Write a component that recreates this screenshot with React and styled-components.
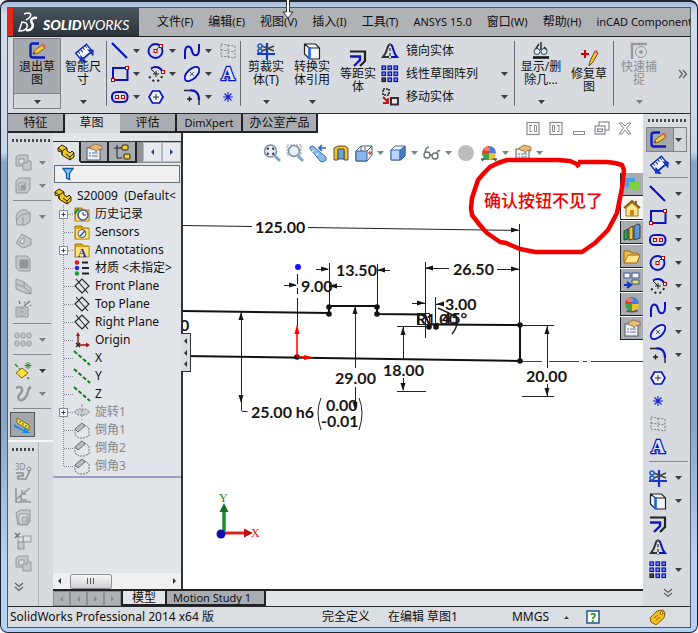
import React from 'react';
import styled, { createGlobalStyle, css } from 'styled-components';

const Global = createGlobalStyle`
  *, *::before, *::after { box-sizing: border-box; }
  body { margin: 0; background: #eef1f5; color: #111; font: 12px/16px "Noto Sans", "Noto Sans CJK SC", sans-serif; }
  button { font: inherit; color: inherit; background: none; border: 0; padding: 0; margin: 0; }
  ul { list-style: none; margin: 0; padding: 0; }
`;

const face = '#d7dade';
const blue = '#0a12b8';

/* ---------- window ---------- */
const Frame = styled.div`
  position: relative;
  display: flex;
  min-height: 100vh;
  padding: 7px 7px 5px;
  border: 1px solid #20242c;
  border-top-width: 2px;
  border-radius: 8px;
  background: linear-gradient(#a9bfdc 0, #cfdcec 12px, #c6d8ec 150px, #86a6c8 160px, #86a6c8 420px, #b4d2f4 560px);
`;
const Shell = styled.div`
  display: flex;
  flex-direction: column;
  flex: 1;
  min-width: 0;
  margin: -1px 0 0;
  background: ${face};
  outline: 1px solid #515964;
`;
const Cursor = styled.svg`
  position: absolute;
  left: 280px;
  top: -2px;
  width: 14px;
  height: 20px;
  z-index: 5;
`;

/* ---------- menu ---------- */
const MenuBar = styled.nav`
  display: flex;
  align-items: stretch;
  height: 29px;
  background: #b0b2b5;
  border-bottom: 1px solid #1b1d20;
  overflow: hidden;
`;
const Brand = styled.div`
  flex: none;
  display: flex;
  align-items: center;
  width: 131px;
  border-left: 5px solid #e2281c;
  background: linear-gradient(#4b555e, #2b333a);
`;
const MenuItems = styled.div`
  display: flex;
  align-items: center;
  gap: 15px;
  padding-left: 18px;
  white-space: nowrap;
`;
const MenuItem = styled.button`
  flex: none;
  font-size: 12px;
`;
const Latin = styled.span`
  font-size: 11px;
`;

/* ---------- ribbon ---------- */
const Ribbon = styled.div`
  display: flex;
  align-items: stretch;
  height: 77px;
  padding: 2px 0 5px 6px;
  border-bottom: 1px solid #26282c;
  background: ${face};
  overflow: hidden;
`;
const BigButton = styled.button`
  flex: none;
  display: flex;
  flex-direction: column;
  align-items: center;
  width: ${p => (p.$wide ? 48 : 46)}px;
  padding-top: ${p => (p.$low ? 10 : 3)}px;
  line-height: 13px;
  color: ${p => (p.$off ? '#8b8e92' : '#111')};
  ${p => p.$on && css`
    background: linear-gradient(#a6a9ad 0 54px, #7e8185 54px 55px, #d3d6da 55px);
    outline: 1px solid #7e8185;
  `}
  > svg:last-child { margin-top: auto; margin-bottom: 4px; }
`;
const BigLabel = styled.span`
  white-space: pre;
  text-align: center;
`;
const Rule = styled.div`
  flex: none;
  width: 1px;
  margin: 2px 2px 2px 0;
  background: #6a6d71;
`;
const ToolGrid = styled.div`
  flex: none;
  display: grid;
  grid-template-columns: repeat(4, 36px);
  grid-auto-rows: 23px;
  width: 131px;
  padding-left: 2px;
  overflow: hidden;
`;
const Tool = styled.button`
  display: flex;
  align-items: center;
  gap: 4px;
`;
const ListTools = styled.div`
  flex: none;
  width: 133px;
  padding-right: 3px;
`;
const ListTool = styled.button`
  display: grid;
  grid-template-columns: 18px 1fr 10px;
  align-items: center;
  gap: 7px;
  width: 100%;
  height: 23px;
  text-align: left;
`;
const More = styled.button`
  margin-left: auto;
  padding-right: 2px;
`;

/* ---------- body ---------- */
const Body = styled.div`
  display: flex;
  flex: 1;
  min-height: 0;
`;
const Main = styled.div`
  position: relative;
  display: flex;
  flex-direction: column;
  flex: 1;
  min-width: 0;
  background: #fff;
`;
const TabRow = styled.div`
  display: flex;
  height: 19px;
`;
const RibbonTab = styled.button`
  flex: none;
  width: ${p => p.$w}px;
  line-height: 16px;
  border: solid #202226;
  border-width: 0 2px 2px 0;
  background: ${p => (p.$on ? face : '#a9acb0')};
  ${p => p.$on && css`border-color: ${face};`}
`;
const Work = styled.div`
  display: flex;
  flex: 1;
`;
const SideBar = styled.div`
  flex: none;
  width: 45px;
  background: ${face};
`;
const SideGroup = styled.div`
  width: ${p => (p.$narrow ? '31px' : '100%')};
  padding: 6px 0 0 3px;
  ${p => p.$narrow ? css`height: 164px; border-right: 1px solid #aeb2b7;` : css`border-bottom: 2px solid #f5f6f8; height: 309px;`}
`;
const Grip = styled.div`
  height: 3px;
  margin: 0 3px ${p => (p.$tight ? 6 : 9)}px 1px;
  background: repeating-linear-gradient(90deg, #44474b 0 2px, transparent 2px 4px);
`;
const SideTool = styled.button`
  display: flex;
  align-items: center;
  gap: 7px;
  height: 23px;
  padding-left: 3px;
  ${p => p.$on && css`width: 23px; padding-left: 2px; background: #a3a6aa; outline: 1px solid #55585c;`}
`;
const SideRule = styled.div`
  height: 1px;
  margin: 3px 2px 4px;
  background: #85888c;
`;

const Center = styled.div`
  display: flex;
  flex-direction: column;
  flex: 1;
  min-width: 0;
`;
const Split = styled.div`
  display: flex;
  flex: 1;
`;
const TreePanel = styled.aside`
  flex: none;
  display: flex;
  flex-direction: column;
  width: 130px;
  padding-top: 8px;
  border-right: 2px solid #303238;
  background: #e1e4e9;
  overflow: hidden;
`;
const PaneTabs = styled.div`
  display: flex;
  height: 22px;
  background: #8e9196;
  border-top: 1px solid #303238;
`;
const PaneTab = styled.button`
  flex: none;
  display: flex;
  align-items: center;
  justify-content: center;
  width: 28px;
  border: solid #202226;
  border-width: 0 2px 2px 0;
  background: ${p => (p.$on ? '#e1e4e9' : '#a9acb0')};
  ${p => p.$on && css`border-bottom-color: #e1e4e9;`}
`;
const PaneScroll = styled.button`
  display: flex;
  align-items: center;
  justify-content: center;
  width: 19px;
  height: 20px;
  background: #e6e9ee;
  border: 1px solid #b4b8be;
`;
const FilterBox = styled.label`
  display: flex;
  align-items: center;
  height: 18px;
  margin: 2px 1px 4px;
  padding-left: 4px;
  background: #f0f0f0;
  border: 1px solid #6a6d72;
  input { flex: 1; min-width: 0; border: 0; background: none; outline: 0; }
`;
const TreeRoot = styled.div`
  display: flex;
  align-items: center;
  gap: 5px;
  height: 18px;
  padding-left: 1px;
  white-space: pre;
`;
const TreeList = styled.ul`
  padding: 0 0 1px 10px;
  border-bottom: 2px solid #9a9fc4;
`;
const TreeItem = styled.li`
  display: flex;
  align-items: center;
  height: 18px;
  white-space: nowrap;
  color: ${p => (p.$off ? '#86898d' : '#111')};
  > svg { margin-right: 4px; }
`;
const BranchBox = styled.span`
  flex: none;
  width: 10px;
`;
const HScroll = styled.div`
  display: flex;
  align-items: center;
  justify-content: space-between;
  height: 16px;
  margin-top: auto;
  padding: 0 4px;
  background: #f0f0f1;
`;
const Thumb = styled.div`
  width: 42px;
  height: 15px;
  margin-right: auto;
  margin-left: 8px;
  border: 1px solid #8d9095;
  border-radius: 2px;
  background: repeating-linear-gradient(90deg, #55585d 0 1px, transparent 1px 3px) no-repeat 16px 3px / 8px 6px, linear-gradient(#f6f6f6, #cfd1d4);
`;
const BottomTabs = styled.div`
  display: flex;
  height: 17px;
  border-top: 2px solid #202226;
  background: #e1e5e9;
`;
const NavButton = styled.button`
  display: flex;
  align-items: center;
  justify-content: center;
  width: 17px;
  background: #aeb1b5;
  border: 1px solid #8b8e92;
`;
const BottomTab = styled.button`
  padding: 0 ${p => (p.$on ? 9 : 13)}px 0 ${p => (p.$on ? 9 : 6)}px;
  font-size: ${p => (p.$on ? 12 : 11)}px;
  line-height: 13px;
  border: solid #202226;
  border-width: 0 2px 2px ${p => (p.$on ? 2 : 0)}px;
  background: ${p => (p.$on ? '#e1e5e9' : '#a9acb0')};
`;

/* ---------- canvas ---------- */
const Canvas = styled.div`
  position: relative;
  flex: 1;
  min-width: 0;
  background: #fff;
`;
const Drawing = styled.svg`
  position: absolute;
  inset: 0;
  width: 100%;
  height: 100%;
  pointer-events: none;
  z-index: 2;
`;
const Dimension = styled.text`
  font: 700 16px Lato, sans-serif;
  fill: #151515;
`;
const Note = styled.text`
  font: 500 17px "Noto Sans CJK SC", sans-serif;
  fill: #f00000;
`;
const AxisName = styled.text`
  font: 12px "Liberation Serif", serif;
  fill: ${p => p.$c};
`;
const SplitHandle = styled.button`
  position: absolute;
  left: -2px;
  top: 200px;
  width: 10px;
  height: 39px;
  display: flex;
  flex-direction: column;
  justify-content: space-evenly;
  align-items: center;
  background: #d9dce1;
  border: 1px solid #303238;
  border-left: 0;
  z-index: 3;
`;
const ViewTools = styled.div`
  position: absolute;
  left: 80px;
  top: 11px;
  display: flex;
  gap: 5px;
`;
const WindowButtons = styled.div`
  position: absolute;
  right: 9px;
  top: 5px;
  display: flex;
  gap: 5px;
`;
const TaskTabs = styled.div`
  position: absolute;
  right: 0;
  top: 59px;
  display: grid;
  gap: 1px;
`;
const TaskTab = styled.button`
  display: flex;
  align-items: center;
  justify-content: center;
  width: 23px;
  height: 23px;
  border: solid #202226;
  border-width: 0 0 1px 1px;
  background: ${p => (p.$on ? '#f4f4f2' : '#a9acb0')};
`;

/* ---------- right toolbar ---------- */
const RightBar = styled.div`
  flex: none;
  width: 47px;
  padding: 5px 0 0 4px;
  background: ${face};
`;
const RightTool = styled.button`
  display: flex;
  align-items: center;
  gap: 8px;
  width: 39px;
  height: 23px;
  padding-left: 2px;
  ${p => p.$on && css`
    background: linear-gradient(90deg, #a6a9ad 0 26px, #7e8185 26px 27px, #d3d6da 27px);
    outline: 1px solid #7e8185;
  `}
`;

/* ---------- status ---------- */
const Status = styled.footer`
  display: flex;
  align-items: center;
  height: 21px;
  padding-left: 2px;
  border-top: 1px solid #26282c;
  background: #dadde1;
  white-space: nowrap;
`;
const StatusText = styled.span`
  margin-left: ${p => p.$gap || 0}px;
`;
const Spring = styled.span`
  flex: ${p => p.$grow};
`;
const StatusMenu = styled.button`
  margin-left: 14px;
`;
const TagButton = styled.button`
  margin: 0 24px 0 46px;
`;

const Svg18 = styled.svg`
  flex: none;
  display: block;
  width: 18px;
  height: 18px;
  overflow: visible;
`;
const TinySvg = styled.svg`
  flex: none;
  display: block;
  width: ${p => p.$w || 7}px;
  height: ${p => p.$h || 4}px;
`;

const Dot = ({ x, y, c = '#c00000' }) => <rect x={x - 1.5} y={y - 1.5} width="3" height="3" fill="#fff" stroke={c} />;
const Folder = () => (
  <g>
    <path d="M2 3h7l1 2h6v11H2z" fill="#e0a818" stroke="#a87808" />
    <path d="M3 6h12.500v9.500H3z" fill="#ffe27a" />
  </g>
);
const Pencil = () => (
  <g>
    <path d="M5 12l2-4 7-5 3 3-7 5z" fill="#f6c83c" stroke="#6b4a10" strokeWidth=".8" />
    <path d="M13 3l2-1.500 3 2.500-2 2z" fill="#e0604c" />
    <path d="M5 12l1-2 1 1z" fill="#222" />
  </g>
);
const Ball = () => (
  <g>
    <path d="M9 9V2A7 7 0 0 1 16 9z" fill="#4a78e0" />
    <path d="M9 9V2A7 7 0 0 0 2 9z" fill="#e03a2a" />
    <path d="M9 9H2A7 7 0 0 0 9 16z" fill="#3aa648" />
    <path d="M9 9H16A7 7 0 0 1 9 16z" fill="#f0c030" />
    <ellipse cx="7" cy="5" rx="3" ry="2" fill="#fff" opacity=".35" />
  </g>
);
const Card = () => (
  <g>
    <rect x="2" y="5" width="13" height="12" fill="#f2f3f5" stroke="#55585c" />
    <path d="M4 10h2M4 13h2M7 10h6M7 13h6" stroke="#5a78b8" />
    <path d="M5 4l5-3 7 2v4l-3-1-3 3-1-2-4-1z" fill="#eab87a" stroke="#8a5a28" strokeWidth=".7" />
  </g>
);
const greyBox = { fill: '#c3c6ca', stroke: '#94979b' };

const art = {
  exit: <><path d="M11 1.500H5Q2.500 1.500 2.500 4V13Q2.500 15.500 5 15.500H17" fill="none" stroke="#1018c0" strokeWidth="2.400" /><Pencil /></>,
  dim: <g transform="rotate(-40 9 9)" stroke="#1430b8" fill="#f4f8ff" strokeWidth="1.500"><path d="M2 6h14v9H2z" /><path d="M5 6v3M8 6v4M11 6v3M14 6v3" strokeWidth="1" /><path d="M1 15l3-3v6zM17 15l-3-3v6zM4 15h10" fill="#2a5ad0" /></g>,
  line: <path d="M1 1l15 15" stroke={blue} strokeWidth="2.200" />,
  rect: <><rect x="2" y="3" width="14.500" height="12" fill="none" stroke={blue} strokeWidth="2" /><Dot x={2} y={15} /><Dot x={16} y={3} /></>,
  slot: <><rect x="1" y="4" width="15.500" height="10" rx="4.500" fill="none" stroke={blue} strokeWidth="2" /><Dot x={6} y={9} /><Dot x={12} y={9} /></>,
  circle: <><circle cx="8.500" cy="9" r="7" fill="none" stroke={blue} strokeWidth="1.900" /><path d="M8 9l6-6" stroke="#c00000" /><Dot x={8.5} y={9} /><Dot x={14} y={4} /></>,
  arc: <><path d="M4 3.500C8 .5 14 2 15.500 7" fill="none" stroke={blue} strokeWidth="2" /><path d="M4 4l5 5M9 6v6M6 9h6" stroke="#222" fill="none" /><path d="M15 11C13 18 4 18 2 10" fill="none" stroke="#222" strokeWidth="2" strokeDasharray="2 3" /><Dot x={16} y={7} /></>,
  spline: <path d="M2 17V9C3 2 8 4 9 9S16 16 16 7V2" fill="none" stroke={blue} strokeWidth="2" />,
  ellipse: <><ellipse cx="9" cy="9" rx="9" ry="4.800" transform="rotate(-43 9 9)" fill="#e4e9f6" stroke={blue} strokeWidth="1.800" /><path d="M7 7l4 4M11 7l-4 4" stroke="#333" strokeWidth=".8" /></>,
  fillet: <><path d="M7 2.500C13 2 16 5 16 12" fill="none" stroke={blue} strokeWidth="2.200" /><path d="M1 2.500h6M16 12v5M4 11h5M6.500 8.500v5" stroke="#222" strokeWidth="1.400" /></>,
  hex: <><path d="M5.500 3h7l3.500 6-3.500 6h-7L2 9z" fill="#eef1fa" stroke={blue} strokeWidth="1.700" /><path d="M6 9h6M9 6v6" stroke="#333" /></>,
  star: <path d="M9 4v10M4 9h10M5.500 5.500l7 7M12.500 5.500l-7 7" stroke="#1420d8" strokeWidth="1.100" />,
  plane: <path d="M2 2l14 2v12L2 14zM2 8l14 2M9 3v12" fill="none" stroke="#777a7e" strokeDasharray="2 1.500" />,
  text: <text x="9" y="15" textAnchor="middle" fontFamily="Liberation Serif, serif" fontWeight="700" fontSize="19" fill="#dfe6fa" stroke={blue} strokeWidth="2.600" paintOrder="stroke">A</text>,
  trim: <><path d="M0 12h18M10 1v17" stroke="#1638c8" strokeWidth="2.200" /><path d="M5 4l12 5M5 9l12-5" stroke="#444" strokeWidth="1.600" /><circle cx="3" cy="4" r="2" fill="none" stroke="#1c60d0" strokeWidth="1.600" /><circle cx="3" cy="9" r="2" fill="none" stroke="#1c60d0" strokeWidth="1.600" /></>,
  convert: <><path d="M1.500 2h11l4 4v11h-10l-5-5zM1.500 2l5 4v11M6.500 6h10" fill="#f3f5f8" stroke="#222" strokeWidth="1.200" /><path d="M6.500 5v12" stroke="#1464e8" strokeWidth="2.500" /></>,
  offset: <g fill="none"><path d="M1 2.500h15V12l-5 5" stroke="#222" strokeWidth="2.200" /><path d="M1 7.500h10V11l-6 6" stroke="#1018b8" strokeWidth="2.400" /></g>,
  mirror: <g fill="none" strokeWidth="2"><path d="M8 2.500C6 4 7 9 2 15h6" stroke="#333" /><path d="M10 2.500c3 2 1 7 6 12.500h-6" stroke={blue} /><path d="M9 1v16" stroke="#333" strokeWidth="1.200" strokeDasharray="3 2" /></g>,
  pattern: <g stroke={blue} fill="#7f90e8" strokeWidth="1.200">{[2, 8, 14].map(y => [2, 8, 14].map(x => <rect key={x + '-' + y} x={x - 1} y={y - 1} width="3.500" height="3.500" {...(x === 2 && y === 14 ? { fill: '#444', stroke: '#222' } : {})} />))}</g>,
  move: <><rect x="2" y="1" width="6" height="6" fill="none" stroke="#222" strokeWidth="1.600" strokeDasharray="2 1" /><path d="M2 9l5 5m0-4v5h-5" stroke="#c01010" strokeWidth="1.800" fill="none" /><rect x="10" y="10" width="7" height="6.500" fill="#e8eaee" stroke="#333" strokeWidth="2" /></>,
  show: <><path d="M1 15.500h16" stroke="#111" strokeWidth="2.500" /><path d="M9 0v8M3 8l4-6M15 8l-3-3" stroke="#222" strokeWidth="1.400" fill="none" /><circle cx="5" cy="9.500" r="3" fill="#d8eaf4" stroke="#33424c" /><circle cx="12" cy="9.500" r="3" fill="#d8eaf4" stroke="#33424c" /></>,
  repair: <><path d="M1 5h8M5 1v8" stroke="#d00000" strokeWidth="2" /><path d="M9 17l1-5 5-10 3 2-5 9z" fill="#f6c83c" stroke="#6b4a10" /><path d="M14 3l1-2 3 1-1 3z" fill="#e0604c" /></>,
  snap: <g fill="none" stroke="#96999d"><path d="M2 17V2h15" strokeWidth="2.500" /><circle cx="11" cy="10" r="5.500" /><circle cx="11" cy="10" r="1.500" fill="#96999d" /></g>,
  boss: <g {...greyBox}><path d="M2 3l3-2h9v9l-2 2H2z" /><path d="M5 5h5v5H5z" fill="#e0e2e5" /><path d="M9 9h4v-2h4v9H9z" /></g>,
  cut: <g {...greyBox}><path d="M2 4l3-3h11v11l-3 4H2z" /><path d="M5 6h6v7H5z" fill="#e0e2e5" /><path d="M7 8h4v4H7z" fill="#9a9da1" /></g>,
  round: <g {...greyBox}><path d="M2 9C3 3 8 1 12 2l4 3v9l-5 3H3z" /><path d="M3 12C5 8 8 6 16 5M9 17V9" fill="none" /></g>,
  rib: <g {...greyBox}><path d="M2 12l6-9 9 5v6l-8 3z" /><path d="M5 12l5-6v6z" fill="#eceef0" /></g>,
  shell: <g {...greyBox}><path d="M2 2h11l3 3v12H5l-3-3z" /><path d="M6 6h8v8H6z" fill="#909397" /></g>,
  draft: <g {...greyBox}><path d="M2 2l8 3 7 6v6l-6-1-9-4z" /><path d="M10 5v5l7 7M2 7l8 3" fill="none" /></g>,
  wizard: <g {...greyBox}><path d="M2 7h12v10H2z" /><circle cx="8" cy="12" r="3.500" fill="#e0e2e5" /><circle cx="8" cy="12" r="1.500" /><path d="M10 6l6-5M10 2l1 1M16 5l1 1M5 1l1 3" stroke="#77797d" strokeWidth="1.400" /></g>,
  linear: <g {...greyBox}>{[2, 8, 14].map(x => <g key={x}><rect x={x - 1} y="2" width="4" height="5" rx="1.500" /><rect x={x - 1} y="10" width="4" height="5" rx="1.500" /></g>)}</g>,
  refgeo: <><path d="M1 2l14 15" stroke="#2a8a2a" strokeWidth="1.500" strokeDasharray="4 2" /><path d="M2 11l6-5 6 5-6 5z" fill="#ffe040" stroke="#8a6a00" /><path d="M14 0v7M10.500 3.500h7M11.500 1l5 5M16.500 1l-5 5" stroke="#2a8a2a" /></>,
  curve: <path d="M2 3C8 0 10 5 6 9S6 18 11 13 12 4 17 2" fill="none" stroke="#95989c" strokeWidth="2.500" />,
  instant: <><path d="M4 2l12 7v5L4 7z" fill="#f2e25c" stroke="#7a6c10" /><path d="M7 5v2M10 7v2M13 9v2" stroke="#443c00" /><path d="M1 8l10 6v-3l6 6H9l1-2-9-4z" fill="#1e88e8" /></>,
  three: <g stroke="#888b8f" fill="none"><text x="1" y="7" fontSize="8" fill="#888b8f" stroke="none">3D</text><path d="M2 10h7v3H4v3h8l4-9" strokeWidth="1.500" /><circle cx="15" cy="6" r="2" /></g>,
  sk3: <g stroke="#94979b" fill="none" strokeWidth="1.500"><path d="M2 2v14h15M2 14l5-5v5h6M7 9l9-7M12 8h-4V4" /></g>,
  box: <g {...greyBox}><path d="M2 4l4-3h10v12l-3 3H4z" /><rect x="5" y="5" width="9" height="10" rx="2" fill="#dddfe2" /><rect x="8" y="8" width="5" height="5" rx="1" /></g>,
  del: <g {...greyBox}><path d="M1 1l5 5M6 1L1 6" stroke="#707377" strokeWidth="1.500" /><rect x="9" y="4" width="8" height="6" fill="#dddfe2" /><rect x="4" y="10" width="6" height="7" /><rect x="4" y="5" width="5" height="5" fill="#dddfe2" /></g>,
  part: <g stroke="#2c2400" strokeWidth="1"><path d="M1 5l4-3 5 3v3l3 2 2-2 2 2v4l-4 3-8-5V9L1 8z" fill="#f2c81e" /><path d="M1 5l4 3 5-3M5 8v4M9 11l4 3 4-4M13 14v3" fill="none" /></g>,
  props: <Card />,
  config: <g stroke="#222"><path d="M4 2v13h5M4 5h5M4 5H1" fill="none" /><rect x="9" y="2" width="6" height="5" rx="1" fill="#f2d020" /><rect x="11" y="11" width="6" height="5" rx="1" fill="#f2d020" /></g>,
  funnel: <path d="M4 3.500h10l-3.500 5v6l-3-1.500V8.500z" fill="#7cc4f4" stroke="#1258a8" strokeWidth="1.300" />,
  history: <><Folder /><circle cx="10" cy="10" r="5" fill="#fff" stroke="#3a58c8" strokeWidth="1.600" /><path d="M10 7v3h3" stroke="#333" fill="none" /><path d="M6 4a7 7 0 0 0-4 5" stroke="#18982c" strokeWidth="2" fill="none" /></>,
  sensors: <><Folder /><circle cx="9" cy="10.500" r="4" fill="#eaf2fc" stroke="#555" /><path d="M7 13l5-5" stroke="#2a58a8" strokeWidth="1.400" /></>,
  notes: <><Folder /><text x="9" y="15.500" textAnchor="middle" fontFamily="Liberation Serif, serif" fontWeight="700" fontSize="12" fill="#1530b8">A</text></>,
  material: <><circle cx="4" cy="3.500" r="2.300" fill="#d82020" /><circle cx="4" cy="9" r="2.300" fill="#2030d8" /><circle cx="4" cy="14.500" r="2.300" fill="#20a030" /><path d="M9 3.500h6M9 9h7M9 14.500h7" stroke="#222" strokeWidth="1.800" /></>,
  refplane: <path d="M2 9l7-7 7 7-7 7zM3 2l12 14" fill="none" stroke="#222" strokeWidth="1.100" />,
  origin: <><path d="M5 14V3m0 11h9" stroke="#a01010" strokeWidth="1.400" /><path d="M3 5l2-4 2 4zM13 11.500l4 2.500-4 2.500z" fill="#b01010" /><path d="M3 12l4 4M7 12l-4 4" stroke="#222" strokeWidth="1.300" /></>,
  axis: <path d="M1 2l16 14" stroke="#148020" strokeWidth="2" strokeDasharray="4 2" />,
  revolve: <g fill="#c9ccd0" stroke="#85888c"><path d="M1 9l4-3h8l4 3-4 3H5z" strokeDasharray="2 1" /><path d="M9 1v16" strokeDasharray="3 2" /></g>,
  chamfer: <g stroke="#707377"><path d="M2 8l7-6 7 5v8l-5 2H6l-4-3z" fill="#e3e5e8" strokeDasharray="2 1" /><path d="M2 8l7-6 3 3-7 6z" fill="#b9bcc0" /></g>,
  zoomfit: <><circle cx="7.500" cy="7" r="6" fill="#e6eef8" stroke="#7e8ca0" strokeWidth="1.500" /><path d="M4.500 6V4.500H6M9 4.500h1.500V6M10.500 8.500V10H9M6 10H4.500V8.500" fill="none" stroke="#333" strokeWidth="1.300" /><path d="M12 12l5 5" stroke="#7a9fd0" strokeWidth="2.800" /></>,
  zoomarea: <><path d="M1 1h14v10H1z" fill="none" stroke="#999" strokeDasharray="2 1" /><circle cx="8" cy="7" r="5.500" fill="#e6eef8" stroke="#7e8ca0" strokeWidth="1.500" /><path d="M12 12l5 5" stroke="#7a9fd0" strokeWidth="2.800" /></>,
  prev: <><path d="M1 3l3-1 8 7 5 4 0 3-3 2-3-1-3-4-7-8z" fill="#8bbbe6" stroke="#2f6fb5" /><path d="M5 6l-2 2M9 9l-2 3" stroke="#fff" /><path d="M17 4h-6m2-3l-3 3 3 3" stroke="#2a62b8" fill="none" strokeWidth="1.600" /></>,
  section: <g stroke="#444" strokeWidth=".9"><path d="M2 4l4-2h7l3 2v12h-4V7H6v9H2z" fill="#f0c22c" /><path d="M6 5h6v10H6z" fill="#5fa4e0" /></g>,
  orient: <g stroke="#3a5a88"><path d="M1 7l5-5h11v9l-5 6H1z" fill="#fff" /><path d="M1 7h11v10H1z" fill="#86b6ec" /><path d="M12 7l5-5M6 2v5" fill="none" /><path d="M10 3v3M15 7v4M13 9h4" stroke="#d02020" /></g>,
  style: <g stroke="#3f68a8"><path d="M2 6l4-4h10v10l-4 4H2z" fill="#eef6ff" /><path d="M2 6h9v10H2z" fill="#b7d6f6" /><path d="M11 6l5-4v10l-5 4z" fill="#4a7cc0" /></g>,
  glasses: <g fill="none" stroke="#6b7278" strokeWidth="1.400"><circle cx="4" cy="11" r="3" /><circle cx="12" cy="12" r="3" /><path d="M2 8c1-4 2-5 4-5M14 9c1-3 2-3 3-2M7 11h2" /></g>,
  sphere: <circle cx="9" cy="9" r="8" fill="#bcbcbc" />,
  scene: <><path d="M2 17l4-5m10 5l-4-5M1 15h16" stroke="#555" strokeWidth="1.400" /><Ball /></>,
  settings: <Card />,
  prevwin: <g fill="none" stroke="#888b90"><rect x="3" y="3.500" width="12" height="12" strokeWidth="1.200" /><path d="M6 6.500h2M6 6v6.500h2M12.500 6.500h-2v6h2v-6" /></g>,
  nextwin: <g fill="none" stroke="#888b90"><rect x="3" y="3.500" width="12" height="12" strokeWidth="1.200" /><path d="M5.500 6.500h2v6h-2v-6M10 6.500h2M12 6v6.500h-2" /></g>,
  minim: <rect x="3.500" y="12.500" width="11" height="3" fill="#fff" stroke="#888b90" />,
  restore: <g fill="#fff" stroke="#888b90" strokeWidth="1.200"><rect x="6" y="3" width="10" height="8" /><rect x="2" y="7" width="10" height="8" /><rect x="4.500" y="10" width="5" height="2.500" /></g>,
  close: <path d="M3 4h3l3 3 3-3h3l-4.500 5L15 15h-3l-3-4-3 4H3l4.500-6z" fill="#fff" stroke="#888b90" />,
  forum: <><path d="M1 3h11v8H6l-3 3v-3H1z" fill="#4aa0e8" /><path d="M6 7h11v7h-2v3l-3-3H6z" fill="#7ed13c" /></>,
  home: <><path d="M3 9v8h12V9L9 4z" fill="#ffe88a" stroke="#a06c10" /><path d="M1 9l8-7 8 7M13 2v3" fill="none" stroke="#8a5a10" strokeWidth="1.800" /><rect x="7" y="11" width="4" height="6" fill="#c88a20" /></>,
  library: <g stroke="#333" strokeWidth=".9"><path d="M1 8l4-2v10l-4 1z" fill="#28a050" /><path d="M6 5l4-2v13l-4 1z" fill="#f0c428" /><path d="M11 3l4-2 2 1v13l-6 2z" fill="#5a96d8" /></g>,
  explorer: <><path d="M1 4h6l1 2h7v9H1z" fill="#f2c24a" stroke="#9a6a10" /><path d="M5 8h12l-3 8H1z" fill="#ffe28c" stroke="#9a6a10" /></>,
  palette: <><g fill="#f4f6fa" stroke="#3a5a90"><rect x="1" y="2" width="6" height="5" /><rect x="9" y="2" width="7" height="5" /><rect x="9" y="9" width="7" height="4" fill="#f0e060" /></g><path d="M1 14h6m-3-3l4 3-4 3" stroke="#1030c8" fill="none" strokeWidth="2" /></>,
  ball: <><ellipse cx="9" cy="16" rx="6" ry="1.500" fill="#55585c" /><Ball /></>,
  help: <><rect x="3" y="3" width="12" height="12" fill="#fff" stroke="#1c5a8a" strokeWidth="1.500" /><text x="9" y="14" textAnchor="middle" fontSize="12" fontWeight="700" fill="#109828">?</text></>,
  tag: <><path d="M2 10l7-7 6-1 2 3-1 5-8 7-5-3z" fill="#f4c020" stroke="#8a5c00" /><circle cx="13.500" cy="5" r="1.400" fill="#fff" stroke="#8a5c00" /><path d="M6 10l4-3M8 12l4-3" stroke="#9a6a00" /></>,
};

const Icon = ({ name }) => <Svg18 viewBox="0 0 18 18" aria-hidden="true">{art[name]}</Svg18>;
const Caret = ({ up, off }) => (
  <TinySvg viewBox="0 0 7 4" aria-hidden="true"><path d={up ? 'M1 4l2.500-3L6 4z' : 'M0 0h7L3.500 4z'} fill={off ? '#7d8084' : '#3a3d42'} /></TinySvg>
);
const Arrow = ({ right, color = '#333' }) => (
  <TinySvg $w={5} $h={8} viewBox="0 0 5 8" aria-hidden="true"><path d={right ? 'M1 1l3 3-3 3z' : 'M4 1L1 4l3 3z'} fill={color} /></TinySvg>
);
const Chevrons = ({ down }) => (
  <TinySvg $w={10} $h={10} viewBox="0 0 10 10" aria-hidden="true">
    <path d={down ? 'M1 1l4 3.500L9 1M1 5l4 3.500L9 5' : 'M1 1l3.500 4L1 9M5 1l3.500 4L5 9'} fill="none" stroke="#5c6064" strokeWidth="1.300" />
  </TinySvg>
);

const menus = [['文件', '(F)'], ['编辑', '(E)'], ['视图', '(V)'], ['插入', '(I)'], ['工具', '(T)'], ['', 'ANSYS 15.0'], ['窗口', '(W)'], ['帮助', '(H)'], ['', 'inCAD Component']];
const sketchTools = [
  ['line', '直线', 1], ['circle', '圆', 1], ['spline', '样条曲线', 1], ['plane', '基准面'],
  ['rect', '矩形', 1], ['arc', '圆弧', 1], ['ellipse', '椭圆', 1], ['text', '文字'],
  ['slot', '槽口', 1], ['hex', '多边形'], ['fillet', '圆角', 1], ['star', '点'],
];
const ribbonTabs = [['特征', 57], ['草图', 55, 1], ['评估', 57], ['DimXpert', 66], ['办公室产品', 75]];
const leftTools = [
  ['boss', 1], ['cut', 1], null, ['round', 1], ['rib'], ['shell'], ['draft'], ['wizard'], null, ['linear', 1], null, ['refgeo', 1], ['curve', 1], null,
];
const tree = [
  ['history', '历史记录', 1], ['sensors', 'Sensors'], ['notes', 'Annotations', 1], ['material', '材质 <未指定>'],
  ['refplane', 'Front Plane'], ['refplane', 'Top Plane'], ['refplane', 'Right Plane'], ['origin', 'Origin'],
  ['axis', 'X'], ['axis', 'Y'], ['axis', 'Z'], ['revolve', '旋转1', 1, 1], ['chamfer', '倒角1', 0, 1], ['chamfer', '倒角2', 0, 1], ['chamfer', '倒角3', 0, 1],
];
const rightTools = [
  ['exit', 1, 1], ['dim', 1], null, ['line', 1], ['rect', 1], ['slot', 1], ['circle', 1], ['arc', 1], ['spline', 1], ['ellipse', 1], ['fillet', 1],
  ['hex'], ['star'], ['plane'], ['text'], null, ['trim', 1], ['convert', 1], ['offset'], ['mirror'], ['pattern', 1],
];
const viewTools = [['zoomfit'], ['zoomarea'], ['prev'], ['section'], ['orient', 1], ['style', 1], ['glasses', 1], ['sphere'], ['scene', 1], ['settings', 1]];

const Big = ({ icon, label, caret, ...rest }) => (
  <BigButton {...rest}>
    <Icon name={icon} />
    <BigLabel>{label}</BigLabel>
    {caret && <Caret off={rest.$off} />}
  </BigButton>
);

const Branch = ({ open, last }) => (
  <BranchBox>
    <Svg18 viewBox="0 0 18 18" aria-hidden="true">
      <path d={last ? 'M.5 0v9' : 'M.5 0v18'} stroke="#8a8d92" strokeDasharray="1 1" />
      <path d="M1 9.500h10" stroke="#8a8d92" strokeDasharray="1 1" />
      {open ? <><rect x="-3.500" y="5.500" width="8" height="8" fill="#fff" stroke="#8a8d92" /><path d="M-1.500 9.500h4M.5 7.500v4" stroke="#2a3a88" /></> : null}
    </Svg18>
  </BranchBox>
);

const Logo = () => (
  <svg width="126" height="28" viewBox="0 0 126 28" role="img" aria-label="SolidWorks">
    <g fill="none" stroke="#fff" strokeWidth="1.500">
      <path d="M11 6c8-3 9 2 2 6" />
      <path d="M6 23l3-9c8 0 7 9-3 9z" />
      <path d="M24 10c-5-1-7 2-5 5s0 8-6 7" strokeWidth="2.500" />
    </g>
    <text x="30" y="22" fill="#fff" fontFamily="Lato, sans-serif" fontStyle="italic" fontSize="14" fontWeight="900">SOLID<tspan fontWeight="400">WORKS</tspan></text>
  </svg>
);

/* Arrowhead with its tip at x,y; d gives the direction it points in. */
const Head = ({ x, y, d, c = '#151515', s = 8 }) => (
  <path d={`M0 0l${-s} -2.500v5z`} transform={`translate(${x} ${y}) rotate(${{ r: 0, d: 90, l: 180, u: 270 }[d]})`} fill={c} />
);

const heads = [
  [519, 230, 'r'], [329, 269, 'r'], [377, 270, 'l'], [297, 285, 'r'], [329, 286, 'l'], [241, 312, 'u'], [241, 403, 'd'], [355, 306, 'u'], [355, 410, 'd'],
  [425, 268, 'l'], [519, 269, 'r'], [425, 303, 'r'], [436, 304, 'l'], [403, 327, 'u'], [403, 391, 'd'], [547, 326, 'u'], [547, 396, 'd'],
];
const points = [[329, 307], [329, 314], [377, 307], [377, 314], [429, 327], [436, 327], [520, 325], [520, 361], [297, 357]];
const dimensions = [
  [255, 233, '125.00'], [336, 276, '13.50'], [301, 292, '9.00'], [453, 275, '26.50'], [445, 310, '3.00'], [416, 325, 'R1.00'], [442, 324, '45°'],
  [335, 384, '29.00'], [383, 376, '18.00'], [526, 382, '20.00'], [251, 418, '25.00 h6'], [326, 411, '0.00'], [321, 427, '-0.01'], [180, 331, '0'],
];

const Model = () => (
  <Drawing role="img" aria-label="草图1">
    <g transform="translate(-183 -133)">
      <g stroke="#222" fill="none" strokeWidth="1">
        <path d="M183 225.500l69 1M308 227.500l211 3M519.500 224v100" />
        <path d="M297.500 274v10M297.500 288v6M297.500 298v28M329.500 263v44M377.500 264v42" />
        <path d="M316 269.500h12M378 270.500h12M284 285.500h12M330 286.500h12" />
        <path d="M241.500 312v98l1 1.500h5M355.500 306v62M355.500 387v20" />
        <path d="M425.500 262v76M435.500 297v28M426 268.500h23M497 269.500h22M412 303.500h13M436 304.500h8" />
        <path d="M397 326.500h30M403.500 327v31M403.500 378v12M397 391.500h29" />
        <path d="M520 325.500h34M547.500 326v42M547.500 384v13M522 396.500h32" />
        <path d="M522 361.500h20M549 361.500h30M583 361.500h4M591 361.500h52" stroke="#444" />
        <path d="M457 322q0 6-5 12M438 308l15 7" strokeWidth="1.500" />
        <path d="M321 398q-6 14 0 32M359 398q6 14 0 32" />
      </g>
      <g stroke="#111" fill="none" strokeWidth="2">
        <path d="M183 311l146 2v-7h48v8l48 .500 4 10h6l85 .500v36" />
        <path d="M183 356l337 5" />
      </g>
      {points.map(([x, y]) => <circle key={x + '.' + y} cx={x} cy={y} r="2.800" fill="#111" />)}
      {heads.map(([x, y, d]) => <Head key={x + d + y} x={x} y={y} d={d} />)}
      <circle cx="298" cy="267" r="3" fill="#1010ff" />
      <path d="M297 357v-24M297 357h8" stroke="#f00" strokeWidth="1.500" />
      <Head x={297} y={324} d="u" c="#f00" s={10} />
      <Head x={314} y={357.5} d="r" c="#f00" s={10} />

      {dimensions.map(([x, y, t]) => <Dimension key={x + t} x={x} y={y}>{t}</Dimension>)}
      <rect x="417.500" y="313.500" width="12" height="11" fill="none" stroke="#222" />

      <path d="M224 531v-20" stroke="#208a38" strokeWidth="3.500" />
      <path d="M219.500 512l4.500-9 4.500 9z" fill="#12702a" />
      <path d="M224 533h22" stroke="#e02020" strokeWidth="3" />
      <path d="M244 528.500l9 4.500-9 4.500z" fill="#b81414" />
      <circle cx="221" cy="534" r="4.500" fill="#1010b0" />
      <AxisName x="219" y="502" $c="#109010">Y</AxisName>
      <AxisName x="251" y="537" $c="#f01010">X</AxisName>

      <path d="M579 167L577 164 570 161 558 160H507L498 163 490 167 484 173 478 180 472 198 471 208 472 215 479 224 487 233 500 242 506 243 520 249 535 252H582L595 243 608 230 617 213 622 188 624 170 622 165 615 163 607 162H578" fill="none" stroke="#f00000" strokeWidth="4.500" strokeLinejoin="round" />
      <Note x="484" y="207">确认按钮不见了</Note>
    </g>
  </Drawing>
);

export default function App() {
  return (
    <Frame>
      <Global />
      <Cursor viewBox="0 0 14 20" aria-hidden="true"><path d="M5.500 0v12H2l5 6 5-6H8.500V0" fill="#fff" stroke="#333" /></Cursor>
      <Shell>
        <MenuBar>
          <Brand><Logo /></Brand>
          <MenuItems>
            {menus.map(([zh, en]) => <MenuItem key={zh + en}>{zh}<Latin>{en}</Latin></MenuItem>)}
          </MenuItems>
        </MenuBar>

        <Ribbon>
          <Big icon="exit" label={'退出草\n图'} caret $on />
          <Big icon="dim" label={'智能尺\n寸'} caret />
          <Rule />
          <ToolGrid>
            {sketchTools.map(([icon, label, caret]) => (
              <Tool key={icon} aria-label={label}><Icon name={icon} />{caret && <Caret />}</Tool>
            ))}
          </ToolGrid>
          <Rule />
          <Big icon="trim" label={'剪裁实\n体(T)'} caret />
          <Big icon="convert" label={'转换实\n体引用'} caret />
          <Big icon="offset" label={'等距实\n体'} $low />
          <ListTools>
            <ListTool><Icon name="mirror" />镜向实体</ListTool>
            <ListTool><Icon name="pattern" />线性草图阵列<Caret /></ListTool>
            <ListTool><Icon name="move" />移动实体<Caret /></ListTool>
          </ListTools>
          <Rule />
          <Big icon="show" label={'显示/删\n除几...'} caret $wide />
          <Big icon="repair" label={'修复草\n图'} $low $wide />
          <Rule />
          <Big icon="snap" label={'快速捕\n捉'} caret $off />
          <More aria-label="更多"><Chevrons /></More>
        </Ribbon>

        <Body>
          <Main>
            <TabRow>
              {ribbonTabs.map(([t, w, on]) => <RibbonTab key={t} $w={w} $on={on}>{t === 'DimXpert' ? <Latin>{t}</Latin> : t}</RibbonTab>)}
            </TabRow>
            <Work>
              <SideBar>
                <SideGroup>
                  <Grip />
                  {leftTools.map((t, i) => t
                    ? <SideTool key={t[0]} aria-label={t[0]}><Icon name={t[0]} />{t[1] && <Caret off={t[0] !== 'refgeo'} />}</SideTool>
                    : <SideRule key={i} />)}
                  <SideTool $on aria-label="Instant3D"><Icon name="instant" /></SideTool>
                </SideGroup>
                <SideGroup $narrow>
                  <Grip />
                  {['three', 'sk3', 'box', 'del', 'boss'].map(n => <SideTool key={n} aria-label={n}><Icon name={n} /></SideTool>)}
                  <SideTool aria-label="更多"><Chevrons down /></SideTool>
                </SideGroup>
              </SideBar>
              <Center>
                <Split>
                  <TreePanel>
                    <PaneTabs>
                      <PaneTab $on aria-label="特征树"><Icon name="part" /></PaneTab>
                      <PaneTab aria-label="属性"><Icon name="props" /></PaneTab>
                      <PaneTab aria-label="配置"><Icon name="config" /></PaneTab>
                      <Spring $grow={1} />
                      <PaneScroll aria-label="向左"><Arrow color="#2a3f9a" /></PaneScroll>
                      <PaneScroll aria-label="向右"><Arrow right color="#2a3f9a" /></PaneScroll>
                    </PaneTabs>
                    <FilterBox><Icon name="funnel" /><input aria-label="过滤" /></FilterBox>
                    <TreeRoot><Icon name="part" />S20009  (Default&lt;</TreeRoot>
                    <TreeList>
                      {tree.map(([icon, label, open, off], i) => (
                        <TreeItem key={label} $off={off}><Branch open={open} last={i === tree.length - 1} /><Icon name={icon} />{label}</TreeItem>
                      ))}
                    </TreeList>
                    <HScroll><Arrow /><Thumb /><Arrow right /></HScroll>
                  </TreePanel>
                  <Canvas>
                    <ViewTools>
                      {viewTools.map(([n, caret]) => <Tool key={n} aria-label={n}><Icon name={n} />{caret && <Caret off />}</Tool>)}
                    </ViewTools>
                    <SplitHandle aria-label="折叠面板"><Arrow /><Arrow /><Arrow /></SplitHandle>
                    <Model />
                  </Canvas>
                </Split>
                <BottomTabs>
                  {['first', 'prev', 'next', 'last'].map((n, i) => <NavButton key={n} aria-label={n}><Arrow right={i > 1} color="#85888c" /></NavButton>)}
                  <BottomTab $on>模型</BottomTab>
                  <BottomTab>Motion Study 1</BottomTab>
                </BottomTabs>
              </Center>
            </Work>
            <WindowButtons>
              {['prevwin', 'nextwin', 'minim', 'restore', 'close'].map(n => <Tool key={n} aria-label={n}><Icon name={n} /></Tool>)}
            </WindowButtons>
            <TaskTabs>
              {['forum', 'home', 'library', 'explorer', 'palette', 'ball', 'props'].map(n => <TaskTab key={n} $on={n === 'home'} aria-label={n}><Icon name={n} /></TaskTab>)}
            </TaskTabs>
          </Main>
          <RightBar>
            <Grip $tight />
            {rightTools.map((t, i) => t
              ? <RightTool key={t[0]} $on={t[2]} aria-label={t[0]}><Icon name={t[0]} />{t[1] && <Caret />}</RightTool>
              : <SideRule key={i} />)}
            <RightTool aria-label="更多"><Spring $grow={1} /><Chevrons down /><Spring $grow={1} /></RightTool>
          </RightBar>
        </Body>

        <Status>
          <StatusText>SolidWorks Professional 2014 x64 版</StatusText>
          <Spring $grow={2} />
          <StatusText>完全定义</StatusText>
          <StatusText $gap={18}>在编辑 草图1</StatusText>
          <Spring $grow={1} />
          <StatusText>MMGS</StatusText>
          <StatusMenu aria-label="单位"><Caret up /></StatusMenu>
          <StatusMenu aria-label="帮助"><Icon name="help" /></StatusMenu>
          <TagButton aria-label="标签"><Icon name="tag" /></TagButton>
        </Status>
      </Shell>
    </Frame>
  );
}
